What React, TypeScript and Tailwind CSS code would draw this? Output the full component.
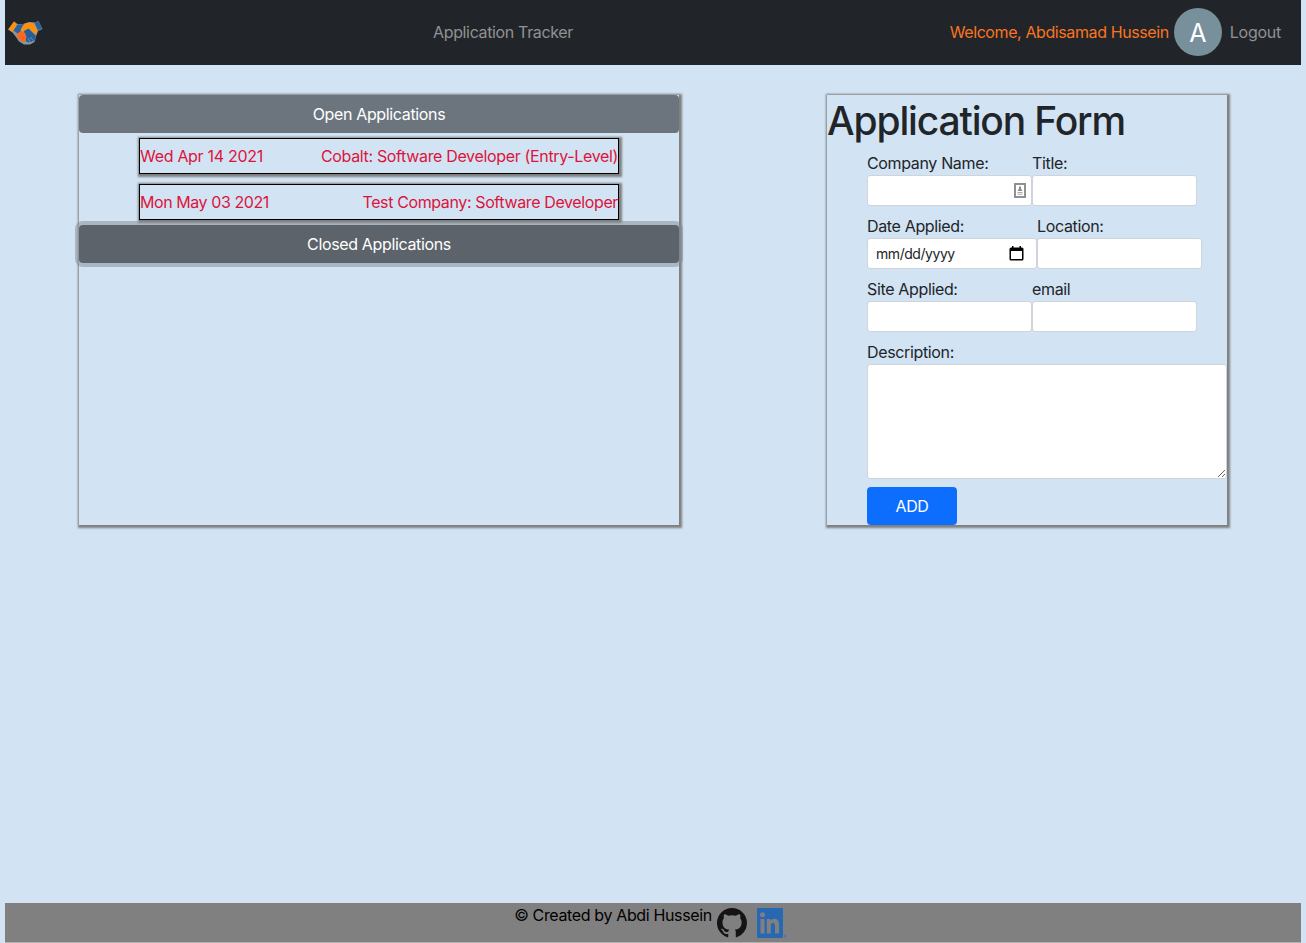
import type { ReactNode } from "react";

function HandshakeLogo() {
  return (
    <svg width="36" height="26" viewBox="0 0 36 26" aria-hidden="true">
      <path d="M6 1.500L0 9.500L4.500 12.500L8 17L11 21.500L16 24.500L22 24.500L26.500 22L28.500 15L30 11L34.500 9L30.500 1L27 2.500L21 2L15 4L9.500 4Z" fill="#8b959c" />
      <path d="M6 1.500L0.500 9.500L4.500 12L9 4.500Z" fill="#ff900e" />
      <path d="M9.500 4.500L17 4L18 6L15 10L9.500 13.500L5.500 10.500Z" fill="#2864a0" />
      <path d="M26.500 3L30.500 1.200L34 8.500L30 10.500Z" fill="#2864a0" />
      <path d="M12.500 10L15 5.500C17 2.500 22 2 26 3.500L29.500 10.500L28 14.500L24.500 12L21 8.500L17 10.500L14 12Z" fill="#ff900e" />
      <path d="M16 11L20.500 8.500L24 12L28 16L26.500 20.500L24 21.500L21 22.500L18 21.500Z" fill="#245f9b" />
      <path d="M9 14L13 11L17 13L18.500 17L17 22L13 21L9.500 17.500Z" fill="#fb681d" />
      <path d="M22.500 17L25 20.500M20 18L22 22" stroke="#9cafc0" strokeWidth="0.600" />
    </svg>
  );
}

function GithubMark() {
  return (
    <svg width="30" height="30" viewBox="0 0 16 16" fill="#161314" aria-hidden="true">
      <path d="M8 0C3.580 0 0 3.580 0 8c0 3.540 2.290 6.530 5.470 7.590.4.070.55-.17.55-.38 0-.19-.01-.82-.01-1.490-2.010.37-2.530-.49-2.690-.94-.09-.23-.48-.94-.82-1.130-.28-.15-.68-.52-.01-.53.63-.01 1.080.58 1.230.82.72 1.210 1.870.87 2.330.66.070-.52.28-.87.510-1.070-1.780-.2-3.640-.89-3.640-3.950 0-.87.310-1.590.82-2.150-.08-.2-.36-1.020.08-2.120 0 0 .67-.21 2.200.82.64-.18 1.320-.27 2-.27s1.360.09 2 .27c1.530-1.040 2.200-.82 2.200-.82.44 1.100.16 1.920.08 2.120.51.56.82 1.270.82 2.150 0 3.070-1.870 3.750-3.650 3.950.29.25.54.73.54 1.480 0 1.070-.01 1.930-.01 2.200 0 .21.15.46.55.38A8.010 8.010 0 0 0 16 8c0-4.420-3.580-8-8-8Z" />
    </svg>
  );
}

function LinkedinMark() {
  return (
    <svg width="30" height="30" viewBox="0 0 30 30" aria-hidden="true">
      <rect width="26" height="30" rx="1" fill="#2867b2" />
      <rect x="3.500" y="11" width="4" height="14.500" fill="#808080" />
      <circle cx="5.500" cy="6.800" r="2.500" fill="#808080" />
      <path d="M9.800 11H13.600V13C15.500 9.700 22 9.700 22 16.300V25.500H18V17.800C18 13.600 13.800 13.600 13.800 17.800V25.500H9.800Z" fill="#808080" />
      <circle cx="28.300" cy="28" r="1.500" fill="#5b7596" />
    </svg>
  );
}

function ContactIcon() {
  return (
    <svg width="12" height="15" viewBox="0 0 12 15" aria-hidden="true">
      <rect x="1" y="1" width="10" height="13" fill="#fff" stroke="#8c8c8c" strokeWidth="1.900" />
      <path d="M5 3.500H7V5.500L8.500 8H3.500L5 5.500Z" fill="#8c8c8c" />
      <path d="M3.500 9.500H8.500M3.500 11.200H8.500" stroke="#aaa" />
    </svg>
  );
}

function CalendarIcon() {
  return (
    <svg width="15" height="15" viewBox="0 0 15 15" aria-hidden="true">
      <path d="M3 0H4.500V1.500H10.500V0H12V1.500H13Q14.500 1.500 14.500 3V13Q14.500 14.500 13 14.500H2Q0.500 14.500 0.500 13V3Q0.500 1.500 2 1.500H3ZM2 5V13H13V5Z" fill="#000" fillRule="evenodd" />
    </svg>
  );
}

function Field({ label, wide = false, children }: { label: string; wide?: boolean; children?: ReactNode }) {
  return (
    <div className={wide ? "w-[170px]" : "w-[165px]"}>
      <div className="h-6 whitespace-nowrap">{label}</div>
      <div className="flex h-[31px] items-center justify-between rounded-[3px] border border-[#ced4da] bg-white px-2 text-[14px] tracking-[-0.45px]">
        {children}
      </div>
    </div>
  );
}

function Entry({ date, title, dateTight, tight }: { date: string; title: string; dateTight: string; tight: string }) {
  return (
    <div className="mx-auto mb-2.5 flex h-9 w-[480px] items-center justify-between border border-black whitespace-nowrap text-[#dc143c] shadow-[1px_1px_2px_2px_gray]">
      <span className={dateTight}>{date}</span>
      <span className={tight}>{title}</span>
    </div>
  );
}

export default function App() {
  return (
    <div className="flex h-[943px] flex-col bg-[#d2e3f3] px-[5px] font-['Inter',sans-serif] text-[16px] leading-6 tracking-[-0.35px] text-[#212529]">
      <nav className="flex h-[65px] shrink-0 items-center bg-[#212529] pb-px whitespace-nowrap text-[#909294]">
        <div className="w-[428px] pt-0.5 pl-[3px]">
          <HandshakeLogo />
        </div>
        <span>Application Tracker</span>
        <div className="ml-auto flex items-center pr-5">
          <span className="tracking-[-0.4px] text-[#fa7420]">Welcome, Abdisamad Hussein</span>
          <span className="ml-[5px] flex size-12 items-center justify-center rounded-full bg-[#78909c] pt-px text-[25px] text-white">A</span>
          <span className="ml-2 tracking-[-0.25px]">Logout</span>
        </div>
      </nav>

      <main className="flex flex-1 items-start pt-[30px]">
        <section className="ml-[74px] h-[430px] w-[600px] shadow-[1px_1px_2px_2px_gray]">
          <div className="mb-[5px] flex h-[38px] items-center justify-center rounded bg-[#6c757d] text-white">Open Applications</div>
          <Entry date="Wed Apr 14 2021" title="Cobalt: Software Developer (Entry-Level)" dateTight="tracking-[-0.3px]" tight="tracking-[-0.34px]" />
          <Entry date="Mon May 03 2021" title="Test Company: Software Developer" dateTight="tracking-[-0.43px]" tight="tracking-[-0.38px]" />
          <div className="-mt-[5px] flex h-[38px] items-center justify-center rounded bg-[#5c636a] text-white shadow-[0_0_0_4px_rgba(130,138,145,0.5)]">
            Closed Applications
          </div>
        </section>

        <section className="ml-[148px] h-[430px] w-[400px] shadow-[1px_1px_2px_2px_gray]">
          <h1 className="mb-2 h-12 text-[39px] leading-[51px] font-medium tracking-[-1.15px] whitespace-nowrap">Application Form</h1>
          <form className="flex flex-col gap-2 pl-10">
            <div className="flex">
              <Field label="Company Name:">
                <span className="-mr-[3px] ml-auto">
                  <ContactIcon />
                </span>
              </Field>
              <Field label="Title:" />
            </div>
            <div className="flex">
              <Field label="Date Applied:" wide>
                <span>mm/dd/yyyy</span>
                <span className="mr-1">
                  <CalendarIcon />
                </span>
              </Field>
              <Field label="Location:" />
            </div>
            <div className="flex">
              <Field label="Site Applied:" />
              <Field label="email" />
            </div>
            <div>
              <div className="h-6">Description:</div>
              <textarea className="block h-[115px] w-full resize rounded-[3px] border border-[#ced4da] bg-white" />
            </div>
            <button type="button" className="h-[38px] w-[90px] rounded bg-[#0d6efd] text-white">
              ADD
            </button>
          </form>
        </section>
      </main>

      <footer className="flex h-10 shrink-0 justify-center border-b border-[#b0b0b0] bg-[#808080] pr-[5px] whitespace-nowrap text-black">
        <span className="tracking-[-0.36px]">© Created by Abdi Hussein</span>
        <span className="mt-[5px] ml-[5px]">
          <GithubMark />
        </span>
        <span className="mt-[5px] ml-2.5">
          <LinkedinMark />
        </span>
      </footer>
    </div>
  );
}
